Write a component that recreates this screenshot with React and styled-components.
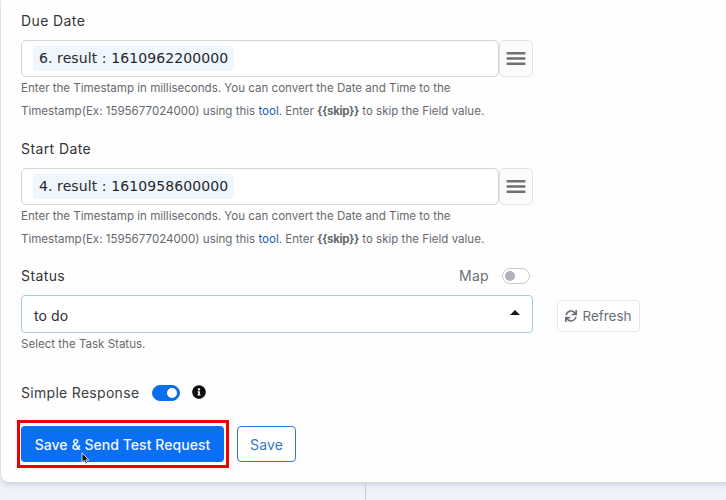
import React from 'react';
import styled, { createGlobalStyle } from 'styled-components';
import { FaInfoCircle, FaSync } from 'react-icons/fa';

const GlobalStyle = createGlobalStyle`
  html, body {
    margin: 0;
    padding: 0;
    height: 500px;
    overflow: hidden;
    background: #eff2fa;
    font-family: Inter, "Noto Sans", sans-serif;
  }
`;

const Page = styled.div`
  width: 726px;
  height: 500px;
  overflow: hidden;
`;

const Card = styled.div`
  box-sizing: border-box;
  width: 740px;
  height: 482px;
  margin-left: 1px;
  padding-left: 20px;
  background: #fefefe;
  border-radius: 0 0 8px 8px;
  box-shadow: 0 2px 6px rgba(60, 70, 100, 0.22);
`;

const Divider = styled.div`
  width: 1px;
  height: 16px;
  margin: 2px 0 0 365px;
  background: #c9ccd3;
`;

const Field = styled.div`
  width: 512px;
  height: 128px;
`;

const Label = styled.div`
  box-sizing: border-box;
  height: 40px;
  padding-top: 12px;
  font-size: 14px;
  line-height: 17px;
  letter-spacing: 0.4px;
  color: #333538;
`;

const InputRow = styled.div`
  display: flex;
  height: 37px;
`;

const TokenInput = styled.div`
  box-sizing: border-box;
  width: 478px;
  padding: 5px 11px;
  background: #fff;
  border: 1px solid #d2d4d7;
  border-radius: 5px;
`;

const Token = styled.span`
  display: inline-block;
  padding: 0 6px;
  height: 25px;
  line-height: 25px;
  border-radius: 4px;
  background: #f0f6fd;
  font-family: "DejaVu Sans", sans-serif;
  font-size: 14px;
  letter-spacing: 0.1px;
  color: #26282c;
`;

const MenuButton = styled.button`
  box-sizing: border-box;
  width: 34px;
  padding: 0;
  display: flex;
  align-items: center;
  justify-content: center;
  background: #fbfbfb;
  border: 1px solid #e4e5e8;
  border-radius: 5px;
`;

const Help = styled.div`
  width: 512px;
  font-size: 11.55px;
  line-height: 22.5px;
  color: #666a70;
  white-space: nowrap;
`;

const HelpLink = styled.span`
  color: #1f5fa8;
`;

const HelpCode = styled.b`
  letter-spacing: -0.4px;
`;

const StatusHead = styled.div`
  box-sizing: border-box;
  display: flex;
  align-items: center;
  justify-content: space-between;
  width: 509px;
  height: 39px;
`;

const StatusLabel = styled.span`
  font-size: 14px;
  letter-spacing: 0.4px;
  color: #333538;
`;

const MapGroup = styled.div`
  display: flex;
  align-items: center;
  gap: 13px;
`;

const MapLabel = styled.span`
  font-size: 14px;
  letter-spacing: 0.3px;
  color: #6b7078;
`;

const Toggle = styled.span`
  box-sizing: border-box;
  width: 28px;
  height: 16px;
  padding: 2px;
  display: flex;
  justify-content: ${p => (p.$on ? 'flex-end' : 'flex-start')};
  border-radius: 8px;
  background: ${p => (p.$on ? '#0a6fe8' : '#fff')};
  border: 1px solid ${p => (p.$on ? '#0a6fe8' : '#c8c8d0')};
`;

const Knob = styled.span`
  width: 10px;
  height: 10px;
  border-radius: 50%;
  background: ${p => (p.$on ? '#fff' : '#b1b1bf')};
`;

const SelectRow = styled.div`
  display: flex;
  align-items: center;
  gap: 24px;
  height: 38px;
`;

const Select = styled.div`
  box-sizing: border-box;
  width: 512px;
  height: 38px;
  padding: 2px 12px 0;
  display: flex;
  align-items: center;
  justify-content: space-between;
  background: #fff;
  border: 1px solid #a5cbe2;
  border-radius: 4px;
  font-size: 14px;
  letter-spacing: 0.1px;
  color: #2b2d31;
`;

const Caret = styled.span`
  width: 0;
  height: 0;
  margin-bottom: 6px;
  border-left: 5px solid transparent;
  border-right: 5px solid transparent;
  border-bottom: 5px solid #17181a;
`;

const RefreshButton = styled.button`
  box-sizing: border-box;
  width: 83px;
  height: 32px;
  margin-top: 4px;
  padding: 0;
  display: flex;
  align-items: center;
  justify-content: center;
  gap: 5px;
  background: #fff;
  border: 1px solid #e3e5e9;
  border-radius: 4px;
  font-family: inherit;
  font-size: 13.5px;
  color: #6a6f76;
`;

const SimpleRow = styled.div`
  display: flex;
  align-items: center;
  height: 16px;
  margin-top: 29.5px;
`;

const SimpleLabel = styled.span`
  width: 131px;
  margin-top: -2px;
  font-size: 14px;
  letter-spacing: 0.3px;
  color: #3a3c40;
`;

const InfoIcon = styled.span`
  display: flex;
  margin: -3px 0 0 12px;
  font-size: 14px;
  color: #0c0c0e;
`;

const Actions = styled.div`
  display: flex;
  align-items: center;
  gap: 8px;
  margin: 19px 0 0 -4px;
`;

const Highlight = styled.div`
  box-sizing: border-box;
  width: 212px;
  height: 48px;
  padding-left: 1px;
  display: flex;
  align-items: center;
  border: 3px solid #f00000;
  position: relative;
`;

const PrimaryButton = styled.button`
  width: 203px;
  height: 36px;
  padding: 0;
  background: #0a6ff0;
  border: none;
  border-radius: 4px;
  font-family: inherit;
  font-size: 14px;
  font-weight: 500;
  letter-spacing: 0.05px;
  color: #f2f7ff;
`;

const SecondaryButton = styled.button`
  box-sizing: border-box;
  width: 59px;
  height: 36px;
  padding: 0;
  background: #fff;
  border: 1px solid #2f79c8;
  border-radius: 4px;
  font-family: inherit;
  font-size: 14px;
  letter-spacing: 0.15px;
  color: #2f79c8;
`;

const Cursor = styled.svg`
  position: absolute;
  left: 61px;
  top: 29px;
`;

const MenuIcon = () => (
  <svg width="20" height="15" viewBox="0 0 20 15">
    <g fill="#6f7074">
      <rect x="0.5" y="1" width="19" height="2.4" rx="1" />
      <rect x="0.5" y="6.3" width="19" height="2.4" rx="1" />
      <rect x="0.5" y="11.6" width="19" height="2.4" rx="1" />
    </g>
  </svg>
);

const TimestampField = ({ label, token }) => (
  <Field>
    <Label>{label}</Label>
    <InputRow>
      <TokenInput><Token>{token}</Token></TokenInput>
      <MenuButton><MenuIcon /></MenuButton>
    </InputRow>
    <Help>
      Enter the Timestamp in milliseconds. You can convert the Date and Time to the<br />
      Timestamp(Ex: 1595677024000) using this <HelpLink>tool</HelpLink>. Enter <HelpCode>{'{{skip}}'}</HelpCode> to skip the Field value.
    </Help>
  </Field>
);

export default function App() {
  return (
    <Page>
      <GlobalStyle />
      <Card>
        <TimestampField label="Due Date" token="6. result : 1610962200000" />
        <TimestampField label="Start Date" token="4. result : 1610958600000" />
        <StatusHead>
          <StatusLabel>Status</StatusLabel>
          <MapGroup>
            <MapLabel>Map</MapLabel>
            <Toggle><Knob /></Toggle>
          </MapGroup>
        </StatusHead>
        <SelectRow>
          <Select>to do<Caret /></Select>
          <RefreshButton><FaSync size={12} />Refresh</RefreshButton>
        </SelectRow>
        <Help>Select the Task Status.</Help>
        <SimpleRow>
          <SimpleLabel>Simple Response</SimpleLabel>
          <Toggle $on><Knob $on /></Toggle>
          <InfoIcon><FaInfoCircle /></InfoIcon>
        </SimpleRow>
        <Actions>
          <Highlight>
            <PrimaryButton>Save &amp; Send Test Request</PrimaryButton>
            <Cursor width="9" height="13" viewBox="0 0 9 13">
              <path d="M1 0.8v9.6l2.2-2 1.5 3.4 1.6-.7-1.5-3.2h3z" fill="#111" stroke="#fff" strokeWidth="0.8" />
            </Cursor>
          </Highlight>
          <SecondaryButton>Save</SecondaryButton>
        </Actions>
      </Card>
      <Divider />
    </Page>
  );
}
